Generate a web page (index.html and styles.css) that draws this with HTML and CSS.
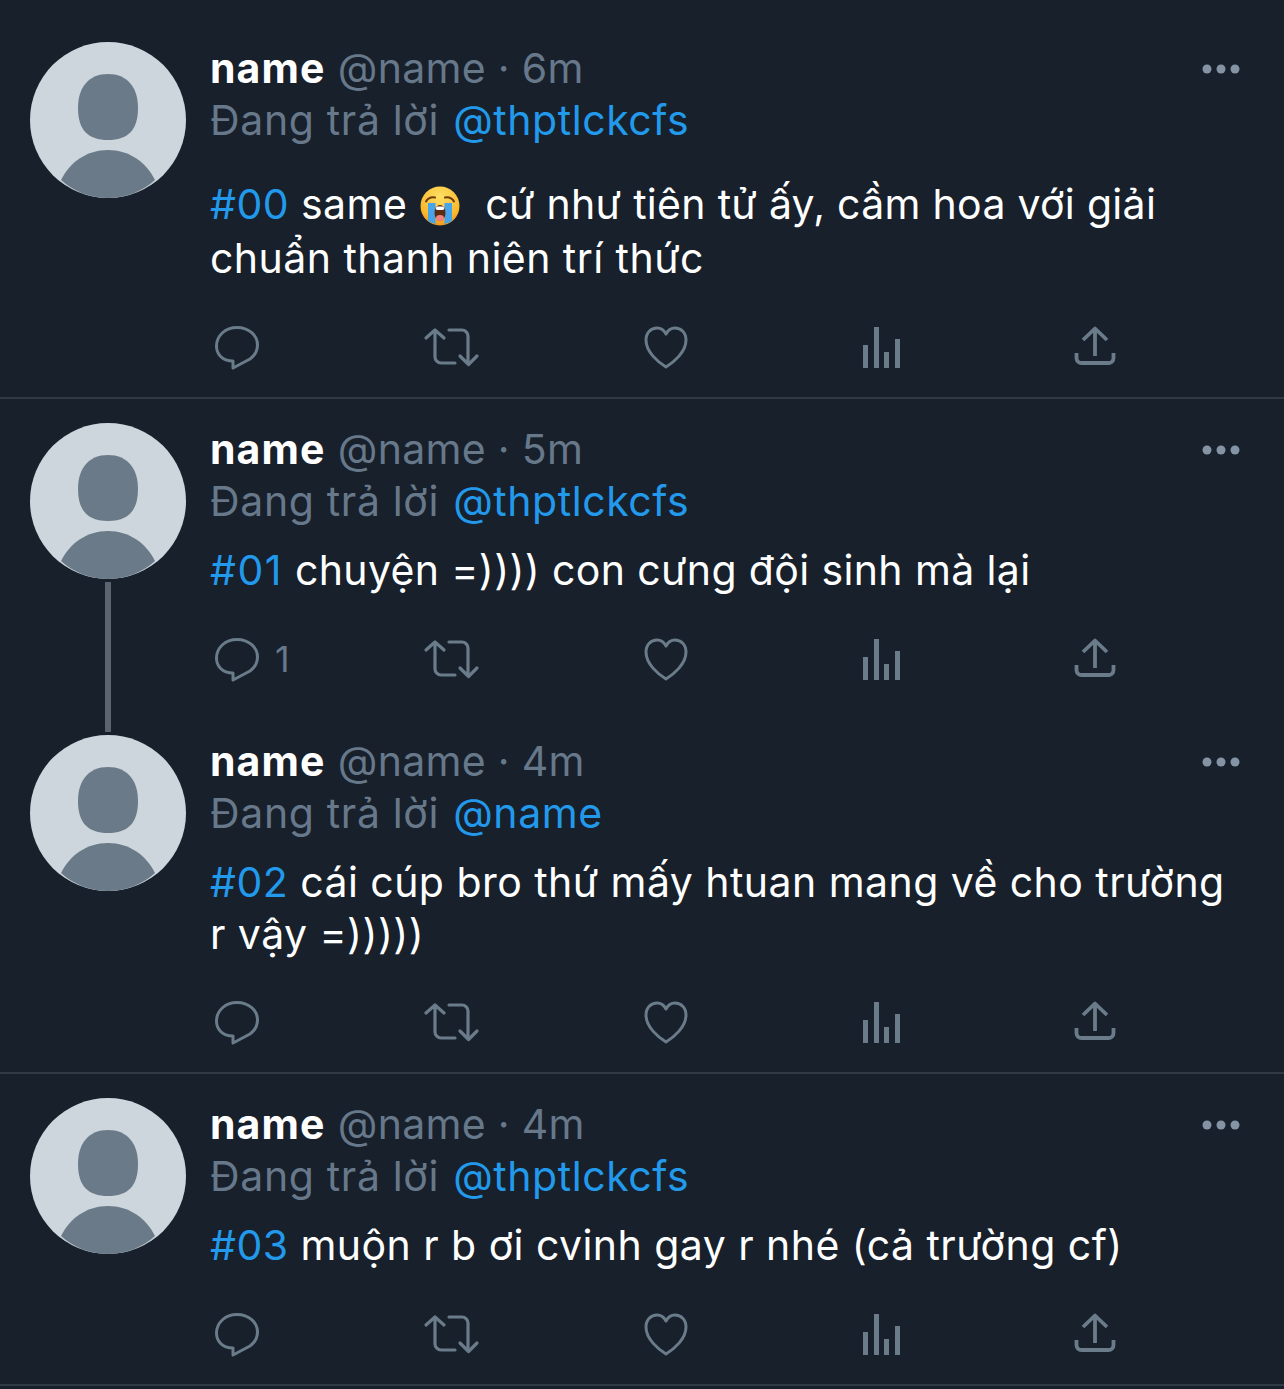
FILE: index.html
```html
<!DOCTYPE html>
<html lang="vi">
<head>
<meta charset="utf-8">
<title>Replies</title>
<link rel="stylesheet" href="styles.css">
</head>
<body>
<svg class="defs" width="0" height="0" aria-hidden="true">
  <defs>
    <symbol id="avatar" viewBox="0 0 156 156">
      <circle cx="78" cy="78" r="78" fill="#ccd6dc"/>
      <path d="M78 32c19 0 30 13 30 34 0 22-10 32-30 32S48 88 48 66c0-21 11-34 30-34z" fill="#6a7a88"/>
      <path d="M31 138c9-18 26-30 47-30s38 12 47 30c-12 11-29 18-47 18s-35-7-47-18z" fill="#6a7a88"/>
    </symbol>
    <symbol id="reply" viewBox="0 0 60 60"><path d="M26 44C15 44 9.500 37 9.500 29C9.500 19 18 10.500 30 10.500C42 10.500 50.500 18.500 50.500 28C50.500 35 47 39 43 42L26 51Z" fill="none" stroke="currentColor" stroke-width="3" stroke-linejoin="round"/></symbol>
    <symbol id="retweet" viewBox="0 0 60 60"><path d="M4 21L13 13L22 21M13 14V40a6 6 0 0 0 6 6H33M27 13H40a6 6 0 0 1 6 6V47M38 39L46.500 47.500L55 39" fill="none" stroke="currentColor" stroke-width="3.200" stroke-linecap="round" stroke-linejoin="round"/></symbol>
    <symbol id="heart" viewBox="0 0 60 60"><path d="M30 50C22 45 10 35 10 23C10 15.500 15 11 21 11C25 11 28 13 30 17C32 13 35 11 39 11C45 11 50 15.500 50 23C50 35 38 45 30 50Z" fill="none" stroke="currentColor" stroke-width="3" stroke-linejoin="round"/></symbol>
    <symbol id="stats" viewBox="0 0 60 60"><path d="M12 28h5v23h-5zM23 10h5v41h-5zM33 35h5v16h-5zM44 22h5v29h-5z" fill="currentColor"/></symbol>
    <symbol id="share" viewBox="0 0 60 60"><path d="M18 23L30 11.500L42 23M30 12V39M11.500 36V41a5 5 0 0 0 5 5H43.500a5 5 0 0 0 5-5V36" fill="none" stroke="currentColor" stroke-width="3.800" stroke-linejoin="round"/></symbol>
    <symbol id="more" viewBox="0 0 38 10"><circle cx="5" cy="5" r="4.500" fill="currentColor"/><circle cx="19" cy="5" r="4.500" fill="currentColor"/><circle cx="33" cy="5" r="4.500" fill="currentColor"/></symbol>
    <radialGradient id="face" cx="50%" cy="25%" r="80%"><stop offset="0" stop-color="#ffdf63"/><stop offset=".7" stop-color="#fbb92e"/><stop offset="1" stop-color="#f0901a"/></radialGradient>
  </defs>
</svg>

<main class="timeline">
  <article class="tweet tweet-first">
    <svg class="avatar"><use href="#avatar"/></svg>
    <div class="content">
      <div class="head">
        <p class="meta"><b class="name">name</b> <span class="handle">@name · 6m</span></p>
        <svg class="more"><use href="#more"/></svg>
      </div>
      <p class="meta">Đang trả lời <span class="link">@thptlckcfs</span></p>
      <p class="body body-tall"><span class="link tag">#00</span> same <svg class="emoji" viewBox="0 0 40 40"><circle cx="20" cy="20" r="19.500" fill="url(#face)"/><path d="M8 17h7.500v21q-4-1-7.500-3zM24.500 17H32v18q-3.500 2-7.500 3z" fill="#45a4ea"/><path d="M6 15.500q3-5 9-4M34 15.500q-3-5-9-4" fill="none" stroke="#6b3b12" stroke-width="2" stroke-linecap="round"/><ellipse cx="20" cy="27" rx="5.500" ry="8" fill="#5b2a12"/><ellipse cx="20" cy="32" rx="4" ry="3" fill="#f0817f"/><rect x="16" y="20.500" width="8" height="3.500" rx="1.500" fill="#fff"/></svg>&nbsp; <span class="tight">cứ như tiên tử ấy, cầm hoa với giải</span><br>chuẩn thanh niên trí thức</p>
      <div class="actions">
        <span class="action"><svg class="icon"><use href="#reply"/></svg></span>
        <span class="action"><svg class="icon"><use href="#retweet"/></svg></span>
        <span class="action"><svg class="icon"><use href="#heart"/></svg></span>
        <span class="action"><svg class="icon"><use href="#stats"/></svg></span>
        <span class="action"><svg class="icon"><use href="#share"/></svg></span>
      </div>
    </div>
  </article>

  <article class="tweet tweet-parent">
    <svg class="avatar"><use href="#avatar"/></svg>
    <div class="connector"></div>
    <div class="content">
      <div class="head">
        <p class="meta"><b class="name">name</b> <span class="handle">@name · 5m</span></p>
        <svg class="more"><use href="#more"/></svg>
      </div>
      <p class="meta">Đang trả lời <span class="link">@thptlckcfs</span></p>
      <p class="body body-close body-single body-narrow"><span class="link tag tag-wide">#01</span> chuyện =)))) con cưng đội sinh mà lại</p>
      <div class="actions">
        <span class="action"><svg class="icon"><use href="#reply"/></svg><span class="count">1</span></span>
        <span class="action"><svg class="icon"><use href="#retweet"/></svg></span>
        <span class="action"><svg class="icon"><use href="#heart"/></svg></span>
        <span class="action"><svg class="icon"><use href="#stats"/></svg></span>
        <span class="action"><svg class="icon"><use href="#share"/></svg></span>
      </div>
    </div>
  </article>

  <article class="tweet tweet-child">
    <svg class="avatar"><use href="#avatar"/></svg>
    <div class="content">
      <div class="head">
        <p class="meta"><b class="name">name</b> <span class="handle">@name · 4m</span></p>
        <svg class="more"><use href="#more"/></svg>
      </div>
      <p class="meta">Đang trả lời <span class="link">@name</span></p>
      <p class="body body-close"><span class="link tag">#02</span> cái cúp bro thứ mấy htuan mang về cho trường<br>r vậy =)))))</p>
      <div class="actions">
        <span class="action"><svg class="icon"><use href="#reply"/></svg></span>
        <span class="action"><svg class="icon"><use href="#retweet"/></svg></span>
        <span class="action"><svg class="icon"><use href="#heart"/></svg></span>
        <span class="action"><svg class="icon"><use href="#stats"/></svg></span>
        <span class="action"><svg class="icon"><use href="#share"/></svg></span>
      </div>
    </div>
  </article>

  <article class="tweet">
    <svg class="avatar"><use href="#avatar"/></svg>
    <div class="content">
      <div class="head">
        <p class="meta"><b class="name">name</b> <span class="handle">@name · 4m</span></p>
        <svg class="more"><use href="#more"/></svg>
      </div>
      <p class="meta">Đang trả lời <span class="link">@thptlckcfs</span></p>
      <p class="body body-close body-single"><span class="link tag">#03</span> muộn r b ơi cvinh gay r nhé (cả trường cf)</p>
      <div class="actions">
        <span class="action"><svg class="icon"><use href="#reply"/></svg></span>
        <span class="action"><svg class="icon"><use href="#retweet"/></svg></span>
        <span class="action"><svg class="icon"><use href="#heart"/></svg></span>
        <span class="action"><svg class="icon"><use href="#stats"/></svg></span>
        <span class="action"><svg class="icon"><use href="#share"/></svg></span>
      </div>
    </div>
  </article>
</main>
</body>
</html>
```
FILE: styles.css
```css
* { box-sizing: border-box; }
html, body { margin: 0; padding: 0; background: #17202b; }
body {
  height: 1389px;
  overflow: hidden;
  font-family: Inter, "Noto Sans", "Liberation Sans", sans-serif;
  color: #fff;
}
.defs { position: absolute; }
.tweet {
  position: relative;
  display: grid;
  grid-template-columns: 156px 1fr;
  column-gap: 25px;
  padding: 24px 44px 20px 30px;
  border-bottom: 2px solid #2f3a44;
}
.tweet-first { padding-top: 42px; }
.tweet-parent { border-bottom: 0; padding-bottom: 46px; }
.tweet-child { padding-top: 0; }
.avatar { display: block; width: 156px; height: 156px; }
.connector {
  position: absolute;
  left: 105px;
  top: 183px;
  bottom: 3px;
  width: 6px;
  background: #5a646e;
}
.content { min-width: 0; padding-top: 1px; margin-left: -1px; }
.head { display: flex; justify-content: space-between; align-items: center; }
.meta {
  margin: -1px 0 1px;
  font-size: 41px;
  letter-spacing: 0.65px;
  line-height: 52px;
  color: #67788a;
  white-space: nowrap;
}
.name { color: #fff; font-weight: 700; letter-spacing: 1.1px; }
.handle { letter-spacing: 0.3px; }
.link { color: #2299ea; margin-left: 2px; letter-spacing: 0.55px; }
.tag { margin-left: 0; letter-spacing: 0.45px; }
.tag-wide { letter-spacing: 1.5px; }
.more { width: 38px; height: 10px; color: #8494a4; }
.body {
  margin: 31px 0 0;
  font-size: 41px;
  letter-spacing: 0.45px;
  line-height: 52px;
  color: #fff;
  white-space: nowrap;
}
.body-tall { line-height: 54px; }
.body-close { margin-top: 17px; }
.body-single { margin-bottom: 33px; }
.body-narrow { letter-spacing: 0.37px; }
.tight { letter-spacing: 0.3px; }
.emoji { display: inline-block; width: 40px; height: 40px; margin: 0 1px; vertical-align: -7px; }
.actions { display: flex; margin: 32px 0 0 -3px; color: #6a7b8a; }
.body-single + .actions { margin-top: 0; }
.action { display: flex; align-items: center; flex: none; width: 214.500px; height: 60px; }
.icon { display: block; width: 60px; height: 60px; flex: none; }
.count { font-size: 36px; color: #67788a; margin-left: 8px; }
```
